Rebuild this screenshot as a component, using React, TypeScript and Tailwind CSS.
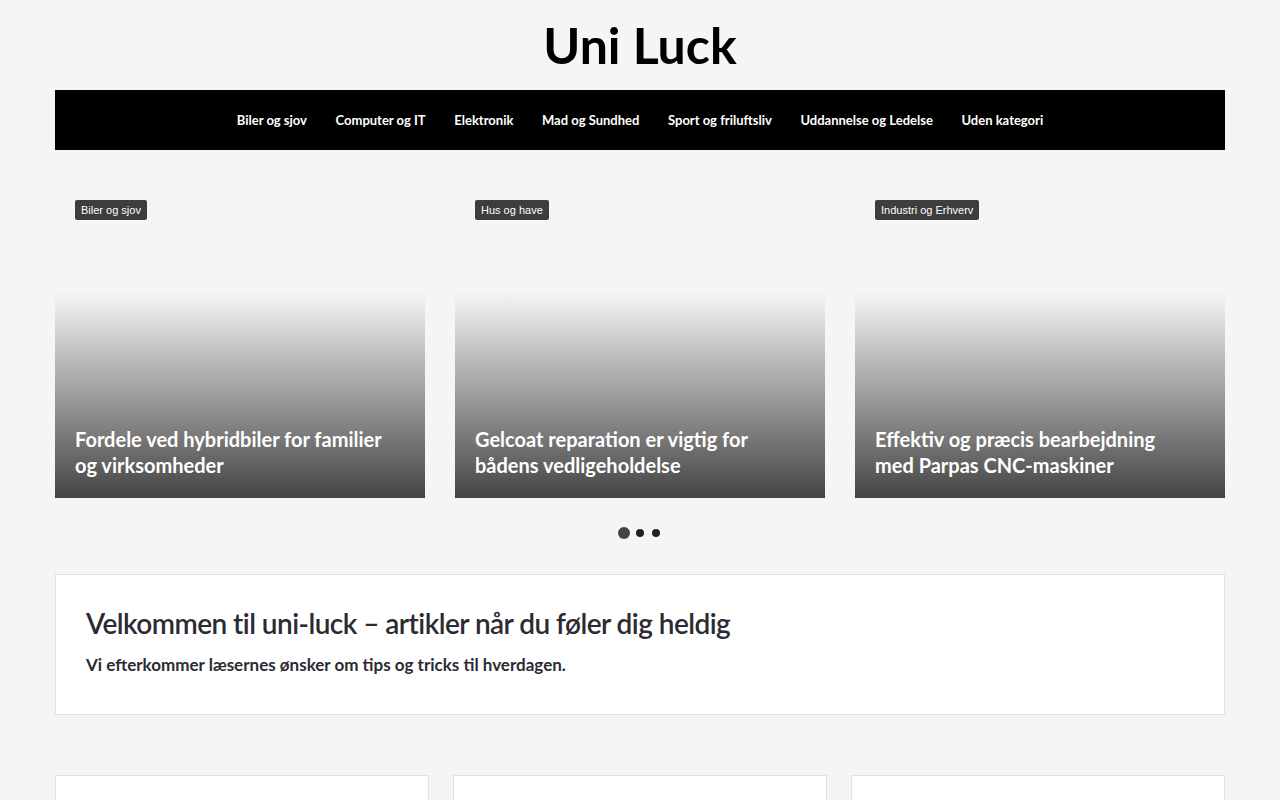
import React from "react";

const nav = [
  "Biler og sjov",
  "Computer og IT",
  "Elektronik",
  "Mad og Sundhed",
  "Sport og friluftsliv",
  "Uddannelse og Ledelse",
  "Uden kategori",
];

const slides = [
  { cat: "Biler og sjov", title: "Fordele ved hybridbiler for familier og virksomheder" },
  { cat: "Hus og have", title: "Gelcoat reparation er vigtig for bådens vedligeholdelse" },
  { cat: "Industri og Erhverv", title: "Effektiv og præcis bearbejdning med Parpas CNC-maskiner" },
];

export default function App() {
  return (
    <div className="min-h-[800px] bg-[#f5f5f5] font-['Lato','Liberation_Sans',sans-serif] text-[#2b2b33]">
      <div className="mx-auto w-[1170px]">
        <header className="flex h-[90px] items-center justify-center">
          <h1 className="text-[50px] font-bold leading-none text-black">Uni Luck</h1>
        </header>
        <nav className="flex h-[60px] items-center justify-center bg-black pt-[2px]">
          {nav.map((n) => (
            <a key={n} className="px-[14.3px] text-[13px] font-bold text-white">
              {n}
            </a>
          ))}
        </nav>

        <div className="mt-[30px] grid grid-cols-3 gap-[30px]">
          {slides.map((s) => (
            <div key={s.cat} className="relative flex h-[318px] flex-col justify-between p-5">
              <div className="absolute inset-x-0 bottom-0 h-[206px] bg-gradient-to-b from-[rgba(0,0,0,0)] to-[rgba(0,0,0,0.72)]" />
              <div className="relative flex">
                <span className="block rounded-[2px] bg-[#3d3d3d] px-[6px] py-[3px] font-['Liberation_Sans',sans-serif] text-[11px] leading-[14px] text-white">
                  {s.cat}
                </span>
              </div>
              <h2 className="relative pr-[12px] text-[20px] font-bold leading-[26px] text-white">{s.title}</h2>
            </div>
          ))}
        </div>

        <div className="mt-[29px] flex items-center justify-center gap-[4px]">
          <span className="flex h-[12px] w-[12px] items-center justify-center">
            <span className="h-[12px] w-[12px] rounded-full bg-[#444]" />
          </span>
          <span className="flex h-[12px] w-[12px] items-center justify-center">
            <span className="h-[8px] w-[8px] rounded-full bg-[#222]" />
          </span>
          <span className="flex h-[12px] w-[12px] items-center justify-center">
            <span className="h-[8px] w-[8px] rounded-full bg-[#222]" />
          </span>
        </div>

        <section className="mt-[35px] h-[141px] border border-[#e2e2e2] bg-white px-[30px] pt-[31px]">
          <h2 className="text-[28px] font-semibold leading-[34px] tracking-[-0.55px]">
            Velkommen til uni-luck – artikler når du føler dig heldig
          </h2>
          <p className="mt-[14px] text-[17px] font-bold leading-[22px]">
            Vi efterkommer læsernes ønsker om tips og tricks til hverdagen.
          </p>
        </section>

        <div className="mt-[60px] grid grid-cols-3 gap-[24px]">
          {[0, 1, 2].map((i) => (
            <div key={i} className="h-[60px] border border-[#e2e2e2] bg-white" />
          ))}
        </div>
      </div>
    </div>
  );
}
